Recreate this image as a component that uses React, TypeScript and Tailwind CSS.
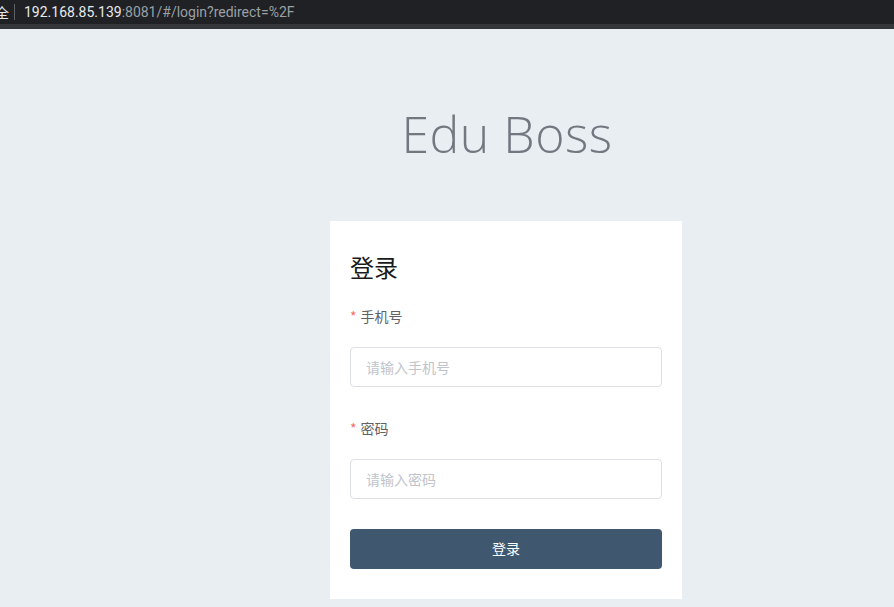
import React from 'react';

const cjk = "font-['Helvetica_Neue','Noto_Sans_CJK_SC',sans-serif]";

export default function App() {
  return (
    <div className="min-h-[607px] bg-[#e9eef3] flex flex-col font-['Noto_Sans_CJK_SC',sans-serif]">
      {/* browser address bar */}
      <div className="h-[24px] bg-[#202124] flex items-center text-[14px] leading-none font-['Roboto','Noto_Sans_CJK_SC',sans-serif]">
        <span className="text-[#e8eaed] -ml-[5px] font-['Noto_Sans_CJK_SC',sans-serif]">全</span>
        <span className="w-px h-[16px] bg-[#5f6368] ml-[5px] mr-[9px]" />
        <span className="text-[#e8eaed]">192.168.85.139</span>
        <span className="text-[#9aa0a6]">:8081/#/login?redirect=%2F</span>
      </div>
      <div className="h-[5px] bg-[#35363a]" />

      <div className="flex flex-col items-center pl-[118px]">
        <h1 className="mt-[72px] h-[66px] text-[50px] leading-[66px] font-light tracking-[0.5px] text-[#737780] font-['Open_Sans',sans-serif] pl-[2px]">
          Edu Boss
        </h1>

        <div className={`mt-[54px] w-[352px] bg-white px-[20px] pt-[20px] pb-[30px] ${cjk}`}>
          <h2 className="h-[56px] flex items-center text-[24px] text-[#1a1a1a] font-normal pb-[5px]">登录</h2>

          <div className="mb-[22px]">
            <label className="h-[40px] flex items-center text-[14px] text-[#606266] mb-[10px] pb-[2px]">
              <span className="text-[#f56c6c] mr-[4px]">*</span>手机号
            </label>
            <input
              className="w-full h-[40px] border border-[#dcdfe6] rounded-[4px] px-[15px] text-[14px] outline-none placeholder:text-[#c0c4cc]"
              placeholder="请输入手机号"
            />
          </div>

          <div className="mb-[30px]">
            <label className="h-[40px] flex items-center text-[14px] text-[#606266] mb-[10px] pb-[2px]">
              <span className="text-[#f56c6c] mr-[4px]">*</span>密码
            </label>
            <input
              type="password"
              className="w-full h-[40px] border border-[#dcdfe6] rounded-[4px] px-[15px] text-[14px] outline-none placeholder:text-[#c0c4cc]"
              placeholder="请输入密码"
            />
          </div>

          <button className="w-full h-[40px] rounded-[4px] bg-[#40586f] text-white text-[14px] pb-[2px]">登录</button>
        </div>
      </div>
    </div>
  );
}
